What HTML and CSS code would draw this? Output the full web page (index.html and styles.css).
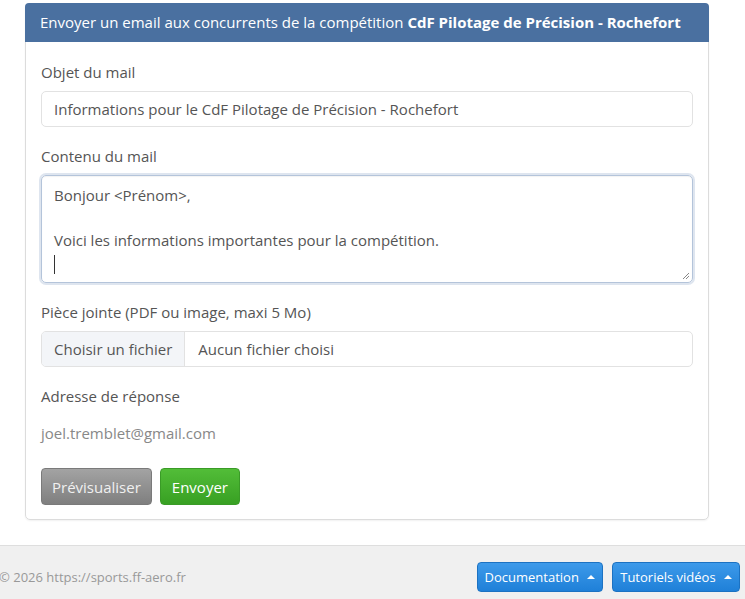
FILE: index.html
```html
<!DOCTYPE html>
<html lang="fr">
<head>
    <meta charset="UTF-8">
    <meta name="viewport" content="width=device-width, initial-scale=1.0">
    <title>Envoyer un email aux concurrents</title>
    <link rel="stylesheet" href="styles.css">
</head>
<body>
    <!-- Mail panel -->
    <div class="panel">
        <div class="panel-heading">
            Envoyer un email aux concurrents de la compétition <b>CdF Pilotage de Précision - Rochefort</b>
        </div>
        <div class="panel-body">
            <div class="form-group">
                <label class="form-label">Objet du mail</label>
                <div class="form-control">Informations pour le CdF Pilotage de Précision - Rochefort</div>
            </div>

            <div class="form-group">
                <label class="form-label">Contenu du mail</label>
                <div class="form-control mail-body">
                    <div class="line">Bonjour &lt;Prénom&gt;,</div>
                    <div class="line">&nbsp;</div>
                    <div class="line">Voici les informations importantes pour la compétition.</div>
                    <div class="line"><span class="caret-line"></span></div>
                    <svg class="grip" width="8" height="8" viewBox="0 0 8 8">
                        <path d="M7 1 L1 7 M7 4 L4 7" stroke="#888" stroke-width="1"/>
                    </svg>
                </div>
            </div>

            <div class="form-group">
                <label class="form-label">Pièce jointe (PDF ou image, maxi 5 Mo)</label>
                <div class="form-control file-input">
                    <span class="file-btn">Choisir un fichier</span>
                    <span class="file-name">Aucun fichier choisi</span>
                </div>
            </div>

            <div class="form-group form-group-last">
                <label class="form-label">Adresse de réponse</label>
                <p class="form-static">joel.tremblet@gmail.com</p>
            </div>

            <div class="actions">
                <button class="btn btn-grey">Prévisualiser</button>
                <button class="btn btn-green">Envoyer</button>
            </div>
        </div>
    </div>

    <!-- Footer -->
    <div class="footer">
        <span class="copyright">© 2026 https://sports.ff-aero.fr</span>
        <div class="footer-links">
            <button class="btn btn-blue">Documentation <span class="tri"></span></button>
            <button class="btn btn-blue">Tutoriels vidéos <span class="tri"></span></button>
        </div>
    </div>
</body>
</html>
```

FILE: styles.css
```css
/* Page */
body {
    margin: 0;
    font-family: 'Open Sans', 'Noto Sans', sans-serif;
    font-size: 15px;
    color: #555;
    background: #fff;
}

/* Panel */
.panel {
    width: 684px;
    margin: 3px 0 0 25px;
    border: 1px solid #dcdcdc;
    border-radius: 5px;
    box-shadow: 0 1px 2px rgba(0, 0, 0, 0.06);
    box-sizing: border-box;
}

.panel-heading {
    height: 39px;
    line-height: 39px;
    padding: 0 15px;
    background: #4a70a0;
    color: #fff;
    font-size: 15px;
    border-radius: 4px 4px 0 0;
    margin: -1px -1px 0;
    white-space: nowrap;
}

.panel-heading b {
    font-weight: 700;
}

.panel-body {
    padding: 20px 15px 14px;
}

/* Form */
.form-group {
    margin-bottom: 19px;
}

.form-group-last {
    margin-bottom: 17px;
}

.form-label {
    display: block;
    line-height: 20px;
    margin-bottom: 9px;
    color: #555;
}

.form-control {
    height: 36px;
    line-height: 34px;
    border: 1px solid #e2e2e2;
    border-radius: 5px;
    padding: 0 12px;
    box-sizing: border-box;
    color: #555;
}

.mail-body {
    position: relative;
    height: 108px;
    line-height: 22.5px;
    padding: 8px 12px 7px;
    border-color: #b4c4da;
    box-shadow: 0 0 0 2px rgba(160, 180, 210, 0.35), inset 0 1px 1px rgba(0, 0, 0, 0.05);
}

.caret-line {
    display: inline-block;
    width: 1px;
    height: 19px;
    background: #333;
    vertical-align: middle;
}

.grip {
    position: absolute;
    right: 2px;
    bottom: 2px;
}

.file-input {
    display: flex;
    padding: 0;
    overflow: hidden;
}

.file-btn {
    padding: 0 12px;
    background: #f3f5f8;
    border-right: 1px solid #e2e2e2;
}

.file-name {
    padding: 0 13px;
}

.form-static {
    margin: 0;
    line-height: 36px;
    color: #888;
}

/* Buttons */
.actions {
    display: flex;
    gap: 8px;
}

.btn {
    font-family: inherit;
    font-size: 15px;
    height: 37px;
    padding: 0 10px;
    border-radius: 4px;
    border: 1px solid transparent;
    color: #fff;
    cursor: pointer;
}

.btn-grey {
    background: linear-gradient(#a3a3a3, #7f7f7f);
    border-color: #7a7a7a;
    color: #f0f0f0;
}

.btn-green {
    padding: 0 11px;
    background: linear-gradient(#52bd38, #38a023);
    border-color: #3a9b27;
}

.btn-blue {
    height: 30px;
    padding: 0 7px;
    font-size: 13px;
    background: linear-gradient(#3d9aea, #1f80d8);
    border-color: #1c72c2;
}

.tri {
    display: inline-block;
    margin-left: 5px;
    border-left: 4px solid transparent;
    border-right: 4px solid transparent;
    border-bottom: 4px solid #fff;
    vertical-align: middle;
    position: relative;
    top: -2px;
}

/* Footer */
.footer {
    margin-top: 25px;
    height: 54px;
    border-top: 1px solid #dedede;
    background: #f0f0f0;
    display: flex;
    align-items: center;
    justify-content: space-between;
    padding: 4px 5px 0 0;
}

.copyright {
    margin-left: -1px;
    color: #999;
    font-size: 13px;
}

.footer-links {
    display: flex;
    gap: 9px;
}
```
